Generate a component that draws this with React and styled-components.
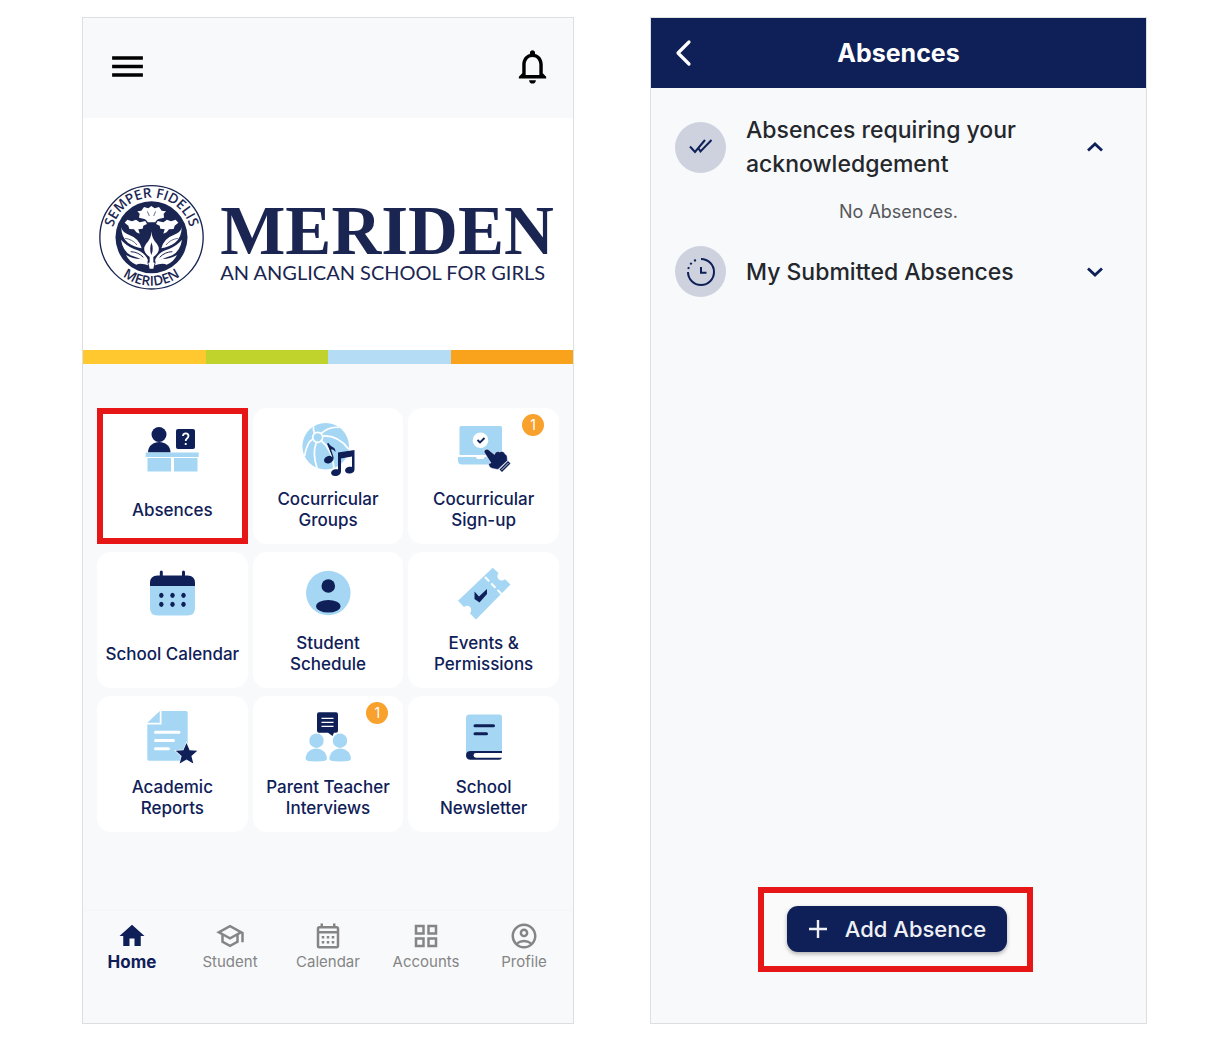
import React from "react";
import { useState } from "react";
import styled, { createGlobalStyle } from "styled-components";
import {
    MdMenu, MdNotificationsNone, MdHome, MdOutlineSchool,
    MdOutlineCalendarMonth, MdOutlineGridView, MdOutlineAccountCircle
} from "react-icons/md";

const navyColor = "#0f2058";
const logoColor = "#1a2552";
const skyColor = "#a5d7f5";
const surfaceColor = "#f8f9fb";
const borderColor = "#dedfe1";
const highlightColor = "#e81717";
const badgeColor = "#f8a12d";
const mutedColor = "#858585";
const whiteColor = "#ffffff";


const GlobalStyle = createGlobalStyle`
    * {
        box-sizing: border-box;
    }

    body {
        margin: 0;
        background-color: ${whiteColor};
        font-family: Inter, "Liberation Sans", sans-serif;
    }

    button {
        font-family: inherit;
        cursor: pointer;
    }

    h1, h2, p {
        margin: 0;
    }

    svg {
        display: block;
    }
`;

const Page = styled.div`
    display: grid;
    grid-template-columns: 492fr 497fr;
    column-gap: 76px;
    min-height: 100vh;
    padding: 17px 82px 18px;
`;

const Phone = styled.main`
    display: flex;
    flex-direction: column;
    background-color: ${surfaceColor};
    border: 1px solid ${borderColor};
`;

const IconButton = styled.button`
    padding: 0;
    border: 0;
    background: none;
    color: ${(props) => props.$color || "#000000"};
`;

/* home screen */

const HomeHeader = styled.header`
    display: flex;
    align-items: center;
    justify-content: space-between;
    height: 100px;
    padding: 0 20px 4px 24px;
`;

const Banner = styled.div`
    display: flex;
    align-items: center;
    justify-content: center;
    gap: 16px;
    height: 232px;
    padding: 6px 3px 0 0;
    background-color: ${whiteColor};
    color: ${logoColor};
`;

const CrestSvg = styled.svg`
    overflow: visible;
`;

const Wordmark = styled.div`
    display: flex;
    flex-direction: column;
    padding-top: 12px;
`;

const SchoolName = styled.span`
    font-family: "Liberation Serif", serif;
    font-size: 69px;
    font-weight: 700;
    line-height: 58px;
`;

const SchoolTagline = styled.span`
    font-family: Lato, sans-serif;
    font-size: 20px;
    line-height: 24px;
    white-space: nowrap;
`;

const Stripe = styled.div`
    display: grid;
    grid-template-columns: repeat(4, 1fr);
    height: 14px;
`;

const StripePart = styled.span`
    background-color: ${(props) => props.$color};
`;

const TileGrid = styled.div`
    display: grid;
    grid-template-columns: repeat(3, 1fr);
    gap: 8px 5px;
    padding: 44px 14px;
`;

const Tile = styled.button`
    position: relative;
    display: flex;
    flex-direction: column;
    align-items: center;
    height: 136px;
    padding: ${(props) => (props.$highlighted ? "8px 0 0" : "14px 0 0")};
    border: ${(props) => (props.$highlighted ? `6px solid ${highlightColor}` : "0")};
    border-radius: ${(props) => (props.$highlighted ? "0" : "14px")};
    background-color: ${whiteColor};
    color: ${navyColor};
`;

const TileLabel = styled.span`
    display: flex;
    align-items: center;
    height: 42px;
    margin-top: 11px;
    font-size: 17px;
    font-weight: 500;
    line-height: 21px;
    white-space: pre-line;
`;

const Badge = styled.span`
    position: absolute;
    top: 6px;
    right: 15px;
    width: 22px;
    height: 22px;
    border-radius: 50%;
    background-color: ${badgeColor};
    color: ${whiteColor};
    font-size: 14px;
    line-height: 22px;
`;

const BottomNav = styled.nav`
    display: grid;
    grid-template-columns: repeat(5, 1fr);
    height: 112px;
    margin-top: auto;
    padding-top: 10px;
    box-shadow: 0 -1px 3px rgba(0, 0, 0, 0.02);
`;

const NavLink = styled.a`
    display: flex;
    flex-direction: column;
    align-items: center;
    color: ${(props) => (props.$active ? navyColor : mutedColor)};
    font-size: ${(props) => (props.$active ? "17px" : "15px")};
    font-weight: ${(props) => (props.$active ? 700 : 400)};
    line-height: 22px;
    text-decoration: none;
`;

/* absences screen */

const TitleBar = styled.header`
    display: grid;
    grid-template-columns: 64px 1fr 64px;
    align-items: center;
    height: 70px;
    background-color: ${navyColor};
    color: ${whiteColor};
`;

const BackButton = styled(IconButton)`
    justify-self: center;
`;

const Title = styled.h1`
    font-size: 25px;
    font-weight: 700;
    line-height: 34px;
    text-align: center;
`;

const Sections = styled.div`
    padding: 25px 24px 0;
`;

const SectionToggle = styled.button`
    display: flex;
    align-items: center;
    gap: 20px;
    width: 100%;
    padding: 0 18px 0 0;
    border: 0;
    background: none;
    color: #24272b;
    font-size: 23px;
    font-weight: 500;
    line-height: 34px;
    text-align: left;
`;

const SectionTitle = styled.span`
    flex: 1;
    max-width: 300px;
`;

const RoundIcon = styled.span`
    display: flex;
    align-items: center;
    justify-content: center;
    width: 51px;
    height: 51px;
    border-radius: 50%;
    background-color: #ced2de;
`;

const ChevronHolder = styled.span`
    margin-left: auto;
`;

const EmptyText = styled.p`
    padding: 18px 0 22px;
    color: #55575a;
    font-size: 18px;
    line-height: 25px;
    text-align: center;
`;

const ActionFrame = styled.div`
    align-self: center;
    margin: auto 6px 51px 0;
    padding: 13px 20px 14px 23px;
    border: 6px solid ${highlightColor};
    background-color: #fafafb;
`;

const AddButton = styled.button`
    display: flex;
    align-items: center;
    justify-content: center;
    gap: 17px;
    width: 220px;
    height: 46px;
    padding: 0;
    border: 0;
    border-radius: 11px;
    background-color: ${navyColor};
    box-shadow: 0 2px 4px rgba(0, 0, 0, 0.3);
    color: #eef0f5;
    font-size: 22px;
    font-weight: 500;
`;


const Crest = () => (
    <CrestSvg width="105" height="105" viewBox="27 45 315 315" role="img" aria-label="Meriden crest">
        <defs>
            <path id="ringTop" d="M65.500 240 L65.500 202 A119 119 0 0 1 303.500 202 L303.500 240" />
            <path id="ringBottom" d="M39.500 202 A145 145 0 0 0 329.500 202" />
        </defs>
        <circle cx="184.500" cy="202" r="155" fill={whiteColor} stroke={logoColor} strokeWidth="4" />
        <circle cx="184.500" cy="202" r="108" fill={logoColor} />
        <g fill={logoColor} fontFamily="Open Sans, sans-serif" fontSize="41" fontWeight="600" textAnchor="middle">
            <text><textPath href="#ringTop" startOffset="50%">SEMPER FIDELIS</textPath></text>
            <text><textPath href="#ringBottom" startOffset="50%">MERIDEN</textPath></text>
        </g>
        <g fill={whiteColor}>
            <path d="M142 124 L154 122 L162 111 L175 115 L184 108 L194 115 L207 111 L215 122 L228 124 L221 131 L222 143 L209 146 Q198 149 196 157 L173 157 Q171 149 160 146 L147 143 L149 131 Z" />
            <Frond />
            <g transform="translate(369 0) scale(-1 1)"><Frond /></g>
        </g>
        <path
            d="M184.500 184 Q185 206 201 222 Q216 243 190 261 L190 277 L194 279 L190 296 L179 296 L175 279 L179 277 L179 261 Q153 243 168 222 Q184 206 184.500 184 Z"
            fill={whiteColor}
            stroke={logoColor}
            strokeWidth="5"
            paintOrder="stroke"
        />
        <path d="M184.500 217 Q177 239 184 255 Q192 239 184.500 217 Z" fill={logoColor} />
        <path d="M172 124 L178 138 M197 124 L191 138" stroke={logoColor} strokeWidth="2" />
    </CrestSvg>
);

// left half of the crest foliage, mirrored for the right half
const Frond = () => (
    <>
        <path d="M104 158 L112 149 L126 154 L138 149 L149 157 L166 153 L171 162 L160 167 L158 176 L145 178 L149 191 L139 187 L132 178 L118 177 L115 167 Z" />
        <path d="M94 172 Q97 188 118 195 Q147 205 155 235 Q132 231 114 218 Q94 203 94 172 Z" />
        <path d="M93 209 Q106 225 132 237 Q160 244 171 264 Q177 275 170 276 Q145 263 122 256 Q98 242 93 209 Z" />
        <path d="M108 255 Q129 267 151 267 Q176 272 179 287 Q151 278 139 284 Q119 277 108 255 Z" />
        <path d="M105 205 Q128 208 141 225" fill="none" stroke={logoColor} strokeWidth="2" />
        <path d="M122 245 Q145 246 160 262" fill="none" stroke={logoColor} strokeWidth="3" />
    </>
);

const TileSvg = ({ children }) => (
    <svg width="56" height="56" viewBox="0 0 56 56" aria-hidden="true">{children}</svg>
);

const AbsencesIcon = () => (
    <TileSvg>
        <circle cx="15" cy="12.500" r="7.500" fill={navyColor} />
        <path d="M4 30.500 C4 16.500 26.500 16.500 26.500 30.500 Z" fill={navyColor} />
        <rect x="32" y="7" width="19" height="20" rx="2" fill={navyColor} />
        <path d="M39 14 C39 10.500 44.500 10.500 44.500 14 C44.500 16.500 41.700 16 41.700 19 M41.700 21 V23" fill="none" stroke={whiteColor} strokeWidth="1.800" />
        <path d="M1.700 30.500 H54.700 V35 H1.700 Z M3.500 36 H27 V49.500 H3.500 Z M30 36 H53.500 V49.500 H30 Z" fill={skyColor} />
    </TileSvg>
);

const GroupsIcon = () => (
    <TileSvg>
        <circle cx="25.700" cy="24.300" r="23.300" fill={skyColor} />
        <g fill="none" stroke={whiteColor} strokeWidth="1.700">
            <circle cx="17.700" cy="15.300" r="5" />
            <path d="M14.500 11.500 Q13 8 13.500 4.500 M21 11.500 Q30 4 39 5.500 M22.500 14 Q38 13 48.500 27 M21.500 19 Q32 27 34 46 M16.500 20 Q12 31 17 46 M13 17 Q7 20 4.500 34" />
        </g>
        <path d="M32.500 35.500 L27 21.500 L28.500 21 C31 26 35.500 24 35.500 30 C33.500 27 32 27.500 31 27.500 L33.500 35 C34 39 31 41.500 27.500 41.500 C23 41 23 36 27 34.500 C29 33.500 31 33.500 32.500 35.500 Z" fill={navyColor} />
        <path d="M38 30.500 L54.500 28 V47 C54.500 50.500 52 51.500 49 51.500 C44.500 51.500 43.500 46.500 48 45 C49.500 44.500 51 44.500 52 45 V34.500 L41 36.500 V49 C41 52.500 38.500 54 35 54 C30.500 54 29.500 49 34 47.500 C35.500 47 37 47 38 47.500 Z" fill={navyColor} />
    </TileSvg>
);

const SignUpIcon = () => (
    <TileSvg>
        <path d="M5 4 H44.500 Q46 4 46 5.500 V33 H3.500 V5.500 Q3.500 4 5 4 Z M2 35 H20 Q20 37 22 37 H26.500 Q28.500 37 28.500 35 H46 V42.500 H6 Q2 42.500 2 38 Z" fill={skyColor} />
        <circle cx="24.500" cy="18.300" r="7.800" fill={whiteColor} />
        <path d="M21.500 18 L24 20.500 L28.500 16" fill="none" stroke={navyColor} strokeWidth="1.800" />
        <path d="M28 30 C28.500 26.500 32 26.500 34 29 L38.500 32.500 C39.500 29.500 42 29 43.500 30 C46 28.500 48.500 30 49 32 C52 33.500 51 36 51.500 38.500 L42 47.500 C38 46.500 34.500 47 33 43.500 C32 42 33 41 35 41 Z" fill={navyColor} stroke={whiteColor} strokeWidth="0.500" />
        <path d="M43.500 47.500 L52 39 L54.500 41.500 L46 50 Z" fill={navyColor} />
        <path d="M45.500 48 L52.500 41" stroke={whiteColor} strokeWidth="0.800" />
    </TileSvg>
);

const CalendarIcon = () => (
    <TileSvg>
        <path d="M6 20 H51 V42 Q51 49.500 43.500 49.500 H13.500 Q6 49.500 6 42 Z" fill={skyColor} />
        <path d="M6 20 V17 Q6 9.500 13.500 9.500 H43.500 Q51 9.500 51 17 V20 Z" fill={navyColor} />
        <path d="M17.300 6 V11 M39.500 6 V11" stroke={navyColor} strokeWidth="3" strokeLinecap="round" />
        {[29.3, 38.3].map((cy) => [17.3, 28.5, 39.5].map((cx) => (
            <ellipse key={`${cx}-${cy}`} cx={cx} cy={cy} rx="2.200" ry="2.600" fill={navyColor} />
        )))}
    </TileSvg>
);

const ScheduleIcon = () => (
    <TileSvg>
        <circle cx="28.300" cy="27" r="22.300" fill={skyColor} />
        <circle cx="28.300" cy="20" r="6.800" fill={navyColor} />
        <ellipse cx="28.300" cy="40.200" rx="12.200" ry="6.300" fill={navyColor} />
    </TileSvg>
);

const EventsIcon = () => (
    <TileSvg>
        <path d="M36.700 1.700 L42.500 7 C39 12 44.500 17 49 13.300 L54.500 18.500 L20 53.500 L14 47.500 C17.500 42.500 12.500 37.500 8 41 L2 34.700 Z" fill={skyColor} />
        <path d="M29 11 L45.500 28" stroke={whiteColor} strokeWidth="2" strokeDasharray="6 3" />
        <path d="M18.500 25.500 L23 30.500 L31 23 V28 L23.500 36.500 L18.500 33 Z" fill={navyColor} />
    </TileSvg>
);

const ReportsIcon = () => (
    <TileSvg>
        <path d="M17.500 1 H42 Q43.700 1 43.700 3 V49 Q43.700 50.700 42 50.700 H5 Q3.300 50.700 3.300 49 V14.500 H17.500 Z M15.800 1 V12.800 H3.300 Z" fill={skyColor} />
        <path d="M11.500 22.200 H35 M11.500 30.500 H29.500 M11.500 38.800 H24.500" stroke={whiteColor} strokeWidth="3" strokeLinecap="round" />
        <path d="M42.500 33 L45.600 40.200 L53.300 40.800 L47.400 46 L49.300 53.500 L42.500 49.500 L35.700 53.500 L37.600 46 L31.700 40.800 L39.400 40.200 Z" fill={navyColor} stroke={whiteColor} strokeWidth="1.200" paintOrder="stroke" />
    </TileSvg>
);

const InterviewsIcon = () => (
    <TileSvg>
        <path d="M19 2.300 H36 Q38 2.300 38 4.500 V20.500 Q38 22.700 36 22.700 H34 L32.500 26 L28 22.700 H19 Q17 22.700 17 20.500 V4.500 Q17 2.300 19 2.300 Z" fill={navyColor} />
        <path d="M21.500 8.300 H33.500 M21.500 12.300 H33.500 M21.500 16.300 H33.500" stroke={whiteColor} strokeWidth="1.300" />
        <g fill={skyColor}>
            <circle cx="16.500" cy="30.700" r="7.200" />
            <circle cx="40" cy="30.700" r="7.200" />
            <path d="M5.500 49 C6 35 26.500 35 27 49 Q27 51.500 16 51.500 Q5.500 51.500 5.500 49 Z" />
            <path d="M29.300 49 C30 35 50.500 35 51 49 Q51 51.500 40 51.500 Q29.300 51.500 29.300 49 Z" />
        </g>
    </TileSvg>
);

const NewsletterIcon = () => (
    <TileSvg>
        <path d="M10 44 V8 Q10 4.500 13.500 4.500 H43.500 Q46 4.500 46 7 V41 H14 Q11 41 10 44 Z" fill={skyColor} />
        <path d="M19 15.700 H37.500 M19 23.700 H30.500" stroke={navyColor} strokeWidth="3" strokeLinecap="round" />
        <path d="M46 41 H14.500 Q10 41 10 45.300 Q10 49.700 14.500 49.700 H43 Q45.500 49.700 46 47.700 H20 Q17.500 47.700 17.500 45.300 Q17.500 43 20 43 H46 Z" fill={navyColor} />
    </TileSvg>
);

const BackIcon = () => (
    <svg width="20" height="30" viewBox="0 0 20 30" fill="none" stroke="currentColor" strokeWidth="3.200" strokeLinecap="round" strokeLinejoin="round">
        <path d="M16 4 L5 15 L16 26" />
    </svg>
);

const DoubleCheckIcon = () => (
    <svg width="28" height="28" viewBox="0 0 28 28" fill="none" stroke={navyColor} strokeWidth="2">
        <path d="M3 13.500 L8 19 L18 7 M11 14.500 L13.500 18.500 L24.500 7" />
    </svg>
);

const PendingClockIcon = () => (
    <svg width="32" height="32" viewBox="0 0 32 32" fill="none" stroke={navyColor} strokeWidth="2">
        <path d="M16 3 A13 13 0 1 1 3 16" />
        <path d="M3.300 13 A13 13 0 0 1 13 3.300" strokeDasharray="2 3" />
        <path d="M16 11 V16.700 H21.500" />
    </svg>
);

const Chevron = ({ up }) => (
    <svg width="18" height="12" viewBox="0 0 18 12" fill="none" stroke={navyColor} strokeWidth="2.800">
        <path d={up ? "M2 9.500 L9 3 L16 9.500" : "M2 2.500 L9 9 L16 2.500"} />
    </svg>
);

const PlusIcon = () => (
    <svg width="20" height="20" viewBox="0 0 20 20" fill="none" stroke="currentColor" strokeWidth="2.400">
        <path d="M1 10 H19 M10 1 V19" />
    </svg>
);


const stripeColors = ["#ffc82e", "#c0d32c", "#b5dcf5", "#f9a21b"];

const tiles = [
    { label: "Absences", icon: <AbsencesIcon />, highlighted: true },
    { label: "Cocurricular\nGroups", icon: <GroupsIcon /> },
    { label: "Cocurricular\nSign-up", icon: <SignUpIcon />, count: 1 },
    { label: "School Calendar", icon: <CalendarIcon /> },
    { label: "Student\nSchedule", icon: <ScheduleIcon /> },
    { label: "Events &\nPermissions", icon: <EventsIcon /> },
    { label: "Academic\nReports", icon: <ReportsIcon /> },
    { label: "Parent Teacher\nInterviews", icon: <InterviewsIcon />, count: 1 },
    { label: "School\nNewsletter", icon: <NewsletterIcon /> },
];

const navItems = [
    { label: "Home", Icon: MdHome, active: true },
    { label: "Student", Icon: MdOutlineSchool },
    { label: "Calendar", Icon: MdOutlineCalendarMonth },
    { label: "Accounts", Icon: MdOutlineGridView },
    { label: "Profile", Icon: MdOutlineAccountCircle },
];


const HomeScreen = () => (
    <Phone>
        <HomeHeader>
            <IconButton aria-label="Menu"><MdMenu size={41} /></IconButton>
            <IconButton aria-label="Notifications"><MdNotificationsNone size={41} /></IconButton>
        </HomeHeader>
        <Banner>
            <Crest />
            <Wordmark>
                <SchoolName>MERIDEN</SchoolName>
                <SchoolTagline>AN ANGLICAN SCHOOL FOR GIRLS</SchoolTagline>
            </Wordmark>
        </Banner>
        <Stripe>
            {stripeColors.map((color) => <StripePart key={color} $color={color} />)}
        </Stripe>
        <TileGrid>
            {tiles.map((tile) => (
                <Tile key={tile.label} $highlighted={tile.highlighted}>
                    {tile.icon}
                    <TileLabel>{tile.label}</TileLabel>
                    {tile.count && <Badge>{tile.count}</Badge>}
                </Tile>
            ))}
        </TileGrid>
        <BottomNav>
            {navItems.map(({ label, Icon, active }) => (
                <NavLink key={label} href={`#${label.toLowerCase()}`} $active={active}>
                    <Icon size={30} />
                    {label}
                </NavLink>
            ))}
        </BottomNav>
    </Phone>
);

const AbsencesScreen = () => {

    const [showRequired, setShowRequired] = useState(true);
    const [showSubmitted, setShowSubmitted] = useState(false);

    return (
        <Phone>
            <TitleBar>
                <BackButton aria-label="Back" $color={whiteColor}><BackIcon /></BackButton>
                <Title>Absences</Title>
            </TitleBar>
            <Sections>
                <SectionToggle aria-expanded={showRequired} onClick={() => setShowRequired(!showRequired)}>
                    <RoundIcon><DoubleCheckIcon /></RoundIcon>
                    <SectionTitle>Absences requiring your acknowledgement</SectionTitle>
                    <ChevronHolder><Chevron up={showRequired} /></ChevronHolder>
                </SectionToggle>
                {showRequired && <EmptyText>No Absences.</EmptyText>}
                <SectionToggle aria-expanded={showSubmitted} onClick={() => setShowSubmitted(!showSubmitted)}>
                    <RoundIcon><PendingClockIcon /></RoundIcon>
                    <SectionTitle>My Submitted Absences</SectionTitle>
                    <ChevronHolder><Chevron up={showSubmitted} /></ChevronHolder>
                </SectionToggle>
                {showSubmitted && <EmptyText>No Absences.</EmptyText>}
            </Sections>
            <ActionFrame>
                <AddButton><PlusIcon />Add Absence</AddButton>
            </ActionFrame>
        </Phone>
    );
}

const App = () => (
    <>
        <GlobalStyle />
        <Page>
            <HomeScreen />
            <AbsencesScreen />
        </Page>
    </>
);

export default App;
